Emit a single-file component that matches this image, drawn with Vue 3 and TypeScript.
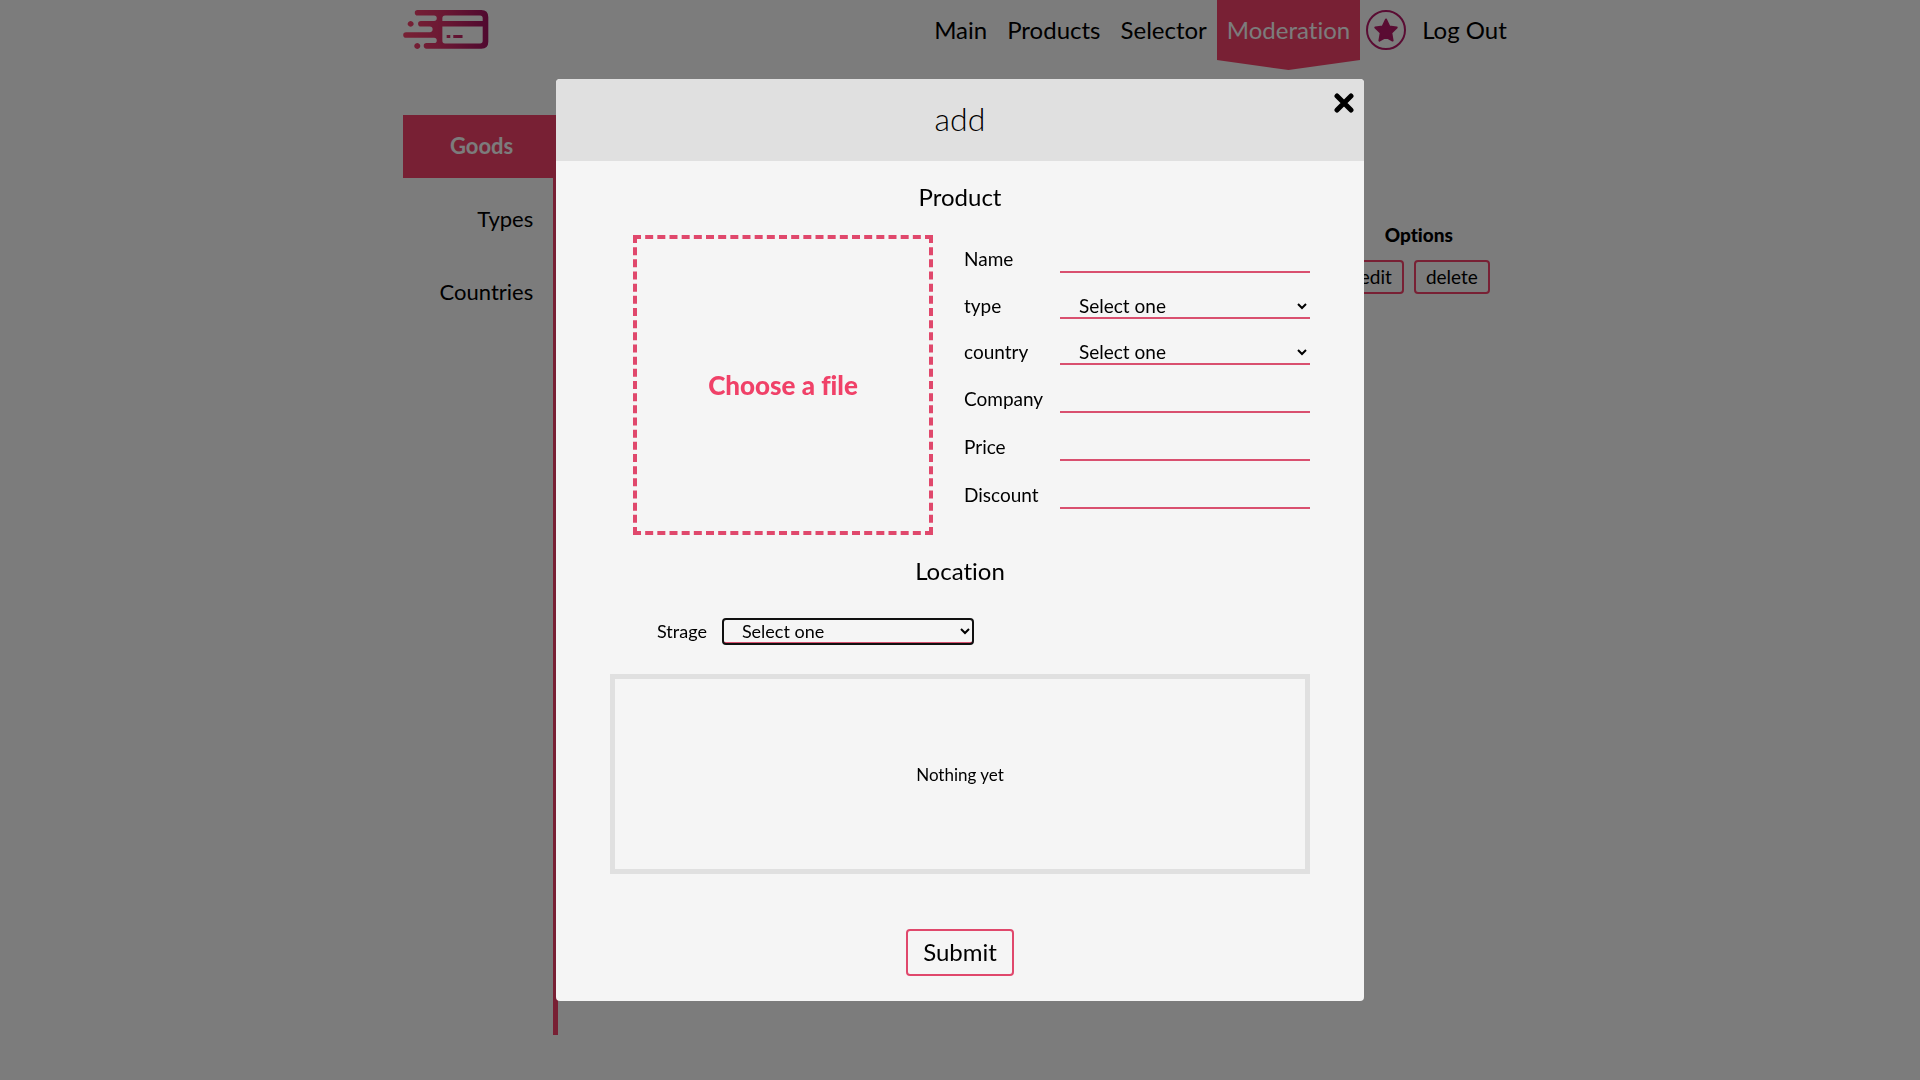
<script setup lang="ts">
import { ref } from 'vue'

interface Field {
  id: string
  label: string
  kind: 'text' | 'select'
}

const navLeft = ['Main', 'Products', 'Selector']
const sections = ['Goods', 'Types', 'Countries']
const activeSection = ref('Goods')

const fields: Field[] = [
  { id: 'name', label: 'Name', kind: 'text' },
  { id: 'type', label: 'type', kind: 'select' },
  { id: 'country', label: 'country', kind: 'select' },
  { id: 'company', label: 'Company', kind: 'text' },
  { id: 'price', label: 'Price', kind: 'text' },
  { id: 'discount', label: 'Discount', kind: 'text' },
]
</script>

<template>
  <div class="page">
    <header class="header">
      <a href="#" class="logo" aria-label="Home">
        <svg viewBox="40 30 258 118" width="86" height="39">
          <defs>
            <linearGradient id="brand" x1="0" y1="0" x2="1" y2="0">
              <stop offset="0" stop-color="#f04168" />
              <stop offset="0.4" stop-color="#dc3468" />
              <stop offset="1" stop-color="#a0125f" />
            </linearGradient>
          </defs>
          <path
            fill="url(#brand)"
            fill-rule="evenodd"
            d="M83 30H276Q297 30 297 52V126Q297 147 276 147H110A8.500 8.500 0 0 1 110 130H133A8 8 0 0 0 133 114H48A8.500 8.500 0 0 1 48 97H120A8 8 0 0 0 120 80H93A8.500 8.500 0 0 1 93 63H133A8 8 0 0 0 133 47H83A8.500 8.500 0 0 1 83 30ZM166 47Q158 47 158 55V63H280V55Q280 47 272 47ZM158 80V123Q158 131 166 131H272Q280 131 280 123V80ZM171 106H182V115H171ZM191 106H219V115H191ZM62 63a9 9 0 1 0 .1 0ZM82 130a9 9 0 1 0 .1 0Z"
          />
        </svg>
      </a>
      <nav class="nav">
        <a v-for="item in navLeft" :key="item" href="#" class="nav-link">{{ item }}</a>
        <a href="#" class="nav-link nav-active">Moderation</a>
        <a href="#" class="star" aria-label="Favourites">
          <svg viewBox="0 0 40 40" width="40" height="40">
            <circle cx="20" cy="20" r="19" fill="none" stroke="#b41866" stroke-width="2" />
            <path
              d="M20 9.500l3.300 7 7.400 1-5.400 5.400 1.300 7.700-6.600-3.700-6.600 3.700 1.300-7.700-5.400-5.400 7.400-1z"
              fill="#b41866"
              stroke="#b41866"
              stroke-width="2"
              stroke-linejoin="round"
            />
          </svg>
        </a>
        <a href="#" class="nav-link">Log Out</a>
      </nav>
    </header>

    <main class="main">
      <aside class="sidebar">
        <a
          v-for="s in sections"
          :key="s"
          href="#"
          class="side-link"
          :class="{ 'side-active': s === activeSection }"
          @click.prevent="activeSection = s"
          >{{ s }}</a
        >
      </aside>
      <section class="content">
        <table class="goods">
          <thead>
            <tr>
              <th>Options</th>
            </tr>
          </thead>
          <tbody>
            <tr>
              <td>
                <div class="row-actions">
                  <button type="button" class="small-btn">edit</button>
                  <button type="button" class="small-btn">delete</button>
                </div>
              </td>
            </tr>
          </tbody>
        </table>
      </section>
    </main>

    <div class="overlay">
      <div class="modal" role="dialog" aria-labelledby="modal-title">
        <div class="modal-head">
          <h1 id="modal-title">add</h1>
          <button type="button" class="close" aria-label="Close">
            <svg viewBox="0 0 20 20" width="20" height="20">
              <path d="M3 3L17 17M17 3L3 17" stroke="#000" stroke-width="5" stroke-linecap="round" />
            </svg>
          </button>
        </div>
        <form class="modal-body" @submit.prevent>
          <h2>Product</h2>
          <div class="product">
            <label class="file">
              <input type="file" class="file-input" />
              <span>Choose a file</span>
            </label>
            <div class="fields">
              <div v-for="f in fields" :key="f.id" class="field" :class="f.kind">
                <label :for="f.id">{{ f.label }}</label>
                <input v-if="f.kind === 'text'" :id="f.id" type="text" class="control" />
                <select v-else :id="f.id" class="control">
                  <option>Select one</option>
                </select>
              </div>
            </div>
          </div>
          <h2>Location</h2>
          <div class="storage">
            <label for="storage">Strage</label>
            <select id="storage" class="control focused">
              <option>Select one</option>
            </select>
          </div>
          <div class="empty">Nothing yet</div>
          <button type="submit" class="submit">Submit</button>
        </form>
      </div>
    </div>
  </div>
</template>

<style>
body {
  margin: 0;
  background: #f8f8f8;
}
</style>

<style scoped>
* {
  box-sizing: border-box;
}
.page {
  min-height: 100vh;
  font-family: Lato, sans-serif;
  font-size: 19px;
  font-weight: 400;
  font-variant-ligatures: none;
  color: #000;
}
a {
  color: inherit;
  text-decoration: none;
}
button,
input,
select {
  font-family: inherit;
  font-weight: inherit;
  color: #000;
}
.header,
.main {
  width: 58%;
  margin: 0 auto;
  display: flex;
}
.header {
  height: 115px;
  justify-content: space-between;
  align-items: flex-start;
}
.logo {
  display: flex;
  padding-top: 10px;
}
.nav {
  display: flex;
  align-items: center;
  height: 60px;
  font-size: 24px;
}
.nav-link {
  height: 60px;
  line-height: 60px;
  padding: 0 10px;
}
.nav-active {
  position: relative;
  background: #f04168;
  color: #f8f8f8;
}
.nav-active::after {
  content: '';
  position: absolute;
  left: 0;
  top: 100%;
  width: 100%;
  height: 10px;
  background: #f04168;
  clip-path: polygon(0 0, 100% 0, 50% 100%);
}
.star {
  display: flex;
  margin: 0 6px;
}
.sidebar {
  width: 155px;
  height: 920px;
  display: flex;
  flex-direction: column;
  gap: 10px;
  border-right: 5px solid #f04168;
  font-size: 22px;
}
.side-link {
  height: 63px;
  line-height: 62px;
  padding-right: 20px;
  text-align: right;
}
.side-active {
  padding-right: 40px;
  background: #f04168;
  color: #f8f8f8;
  font-weight: 700;
}
.content {
  flex: 1;
  display: flex;
  justify-content: flex-end;
  align-items: flex-start;
  padding: 105px 27px 0 0;
}
.goods {
  border-collapse: collapse;
}
.goods th {
  padding: 0;
  height: 28px;
  font-weight: 900;
}
.goods td {
  padding: 12px 0 0;
}
.row-actions {
  display: flex;
  gap: 10px;
}
.small-btn {
  height: 34px;
  padding: 0 10px 2px;
  border: 2px solid #f04168;
  border-radius: 4px;
  background: none;
  font-size: 19px;
}
.overlay {
  position: fixed;
  inset: 0;
  display: flex;
  align-items: center;
  justify-content: center;
  background: rgba(0, 0, 0, 0.5);
}
.modal {
  width: 808px;
  max-width: 96vw;
  border-radius: 4px;
  overflow: hidden;
  background: #f5f5f5;
}
.modal-head {
  position: relative;
  height: 82px;
  background: #e0e0e0;
}
.modal-head h1 {
  margin: 0;
  line-height: 80px;
  font-size: 32px;
  font-weight: 300;
  text-align: center;
}
.close {
  position: absolute;
  top: 14px;
  right: 10px;
  display: flex;
  padding: 0;
  border: 0;
  background: none;
}
.modal-body {
  display: flex;
  flex-direction: column;
  padding: 20px 54px 25px;
}
h2 {
  margin: 0;
  line-height: 32px;
  font-size: 24px;
  font-weight: 400;
  text-align: center;
}
.product {
  display: flex;
  justify-content: space-between;
  margin: 22px 0 20px;
  padding-left: 23px;
}
.file {
  position: relative;
  width: 300px;
  height: 300px;
  display: flex;
  align-items: center;
  justify-content: center;
  border: 4px dashed #e0486c;
  color: #f04168;
  font-size: 26px;
  font-weight: 900;
}
.file-input {
  position: absolute;
  inset: 0;
  opacity: 0;
}
.fields {
  width: 346px;
}
.field {
  display: flex;
  align-items: center;
  justify-content: space-between;
  height: 48px;
}
.field.select {
  height: 46px;
}
.field label {
  line-height: 28px;
}
.control {
  width: 250px;
  height: 28px;
  padding: 0 0 0 15px;
  border: 0;
  border-bottom: 2px solid #d9506f;
  border-radius: 0;
  outline: 0;
  background: transparent;
  font-size: 19px;
}
select.control {
  height: 26px;
}
.storage {
  display: flex;
  align-items: center;
  gap: 16px;
  height: 28px;
  margin: 30px 0 29px;
  padding-left: 47px;
  font-size: 18px;
}
select.focused {
  height: 25px;
  border-radius: 3px;
  outline: 2px solid #101010;
  outline-offset: -1px;
  font-size: 18px;
}
.empty {
  display: flex;
  align-items: center;
  justify-content: center;
  height: 200px;
  border: 5px solid #e0e0e0;
  font-size: 17px;
}
.submit {
  align-self: center;
  height: 47px;
  margin-top: 55px;
  padding: 0 15px 2px;
  border: 2px solid #e0486c;
  border-radius: 4px;
  background: none;
  font-size: 24px;
}
</style>
